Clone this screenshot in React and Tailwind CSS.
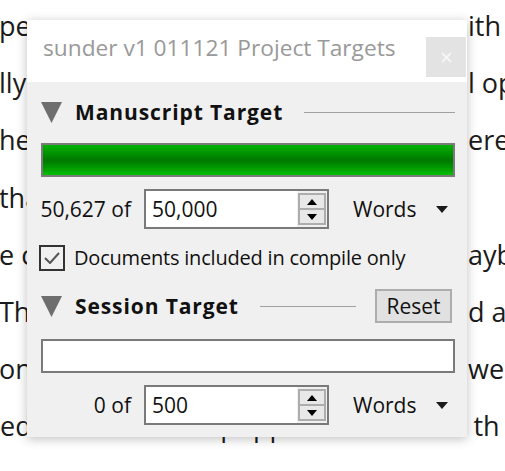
import React from "react";

const lines = [
  ["pe", "ith"],
  ["lly", "l op"],
  ["he", "ere"],
  ["tha", ""],
  ["e c", "ayb"],
  ["Th", "d as"],
  ["on", "we"],
];

function Tri() {
  return (
    <svg width="21" height="21" viewBox="0 0 21 21">
      <polygon points="0,0 21,0 10.5,21" fill="#6e6e6e" />
    </svg>
  );
}

function Arrow() {
  return (
    <svg width="12" height="7" viewBox="0 0 12 7">
      <polygon points="0,0 12,0 6,7" fill="#1a1a1a" />
    </svg>
  );
}

function SpinBox({ value }) {
  return (
    <div className="flex h-[40px] w-[185px] items-center border-2 border-[#7a7a7a] bg-white">
      <div className="flex-1 pl-[6px] text-[21px] leading-none text-[#111]">{value}</div>
      <div className="flex h-full w-[30px] flex-col justify-center bg-[#f0f0f0] px-[1px] py-[2px]">
        <div className="flex flex-1 items-center justify-center border-2 border-[#adadad] bg-[#e8e8e8]">
          <svg width="10" height="6" viewBox="0 0 10 6"><polygon points="5,0 10,6 0,6" fill="#000" /></svg>
        </div>
        <div className="flex flex-1 items-center justify-center border-2 border-t-0 border-[#adadad] bg-[#e8e8e8]">
          <svg width="10" height="6" viewBox="0 0 10 6"><polygon points="0,0 10,0 5,6" fill="#000" /></svg>
        </div>
      </div>
    </div>
  );
}

function CountRow({ label, value }) {
  return (
    <div className="flex h-[40px] items-center">
      <div className="w-[91px] text-right text-[21px] leading-none text-[#111]">{label}</div>
      <div className="ml-[13px]"><SpinBox value={value} /></div>
      <div className="ml-[24px] text-[21px] leading-none text-[#111]">Words</div>
      <div className="ml-[20px] mt-[1px]"><Arrow /></div>
    </div>
  );
}

export default function App() {
  return (
    <div
      className="relative h-[471px] w-[505px] overflow-hidden bg-white"
      style={{ fontFamily: '"Open Sans", "Noto Sans", sans-serif' }}
    >
      <div className="-mt-[3px] text-[27px] leading-[57.2px] text-[#1b1b1b]">
        {lines.map(([l, r], i) => (
          <div key={i} className="flex justify-between whitespace-nowrap">
            <span className="-ml-[1px]">{l}</span>
            <span className="w-[37px] overflow-hidden">{r}</span>
          </div>
        ))}
        <div className="whitespace-nowrap">ed and then I am popped the look on th</div>
      </div>

      <div className="absolute left-[27px] top-[20px] flex h-[417px] w-[440px] flex-col bg-[#f0f0f0] shadow-[0_2px_10px_rgba(0,0,0,0.25)]">
        <div className="flex h-[62px] items-start bg-white">
          <div className="pl-[16px] pt-[13px] text-[22.7px] leading-[30px] text-[#999]">
            sunder v1 011121 Project Targets
          </div>
          <div className="ml-auto mr-[1px] mt-[17px] flex h-[40px] w-[40px] items-center justify-center bg-[#e3e3e3]">
            <svg width="11" height="11" viewBox="0 0 11 11">
              <path d="M1 1 L10 10 M10 1 L1 10" stroke="#f5f5f5" strokeWidth="2" />
            </svg>
          </div>
        </div>

        <div className="flex flex-col pl-[14px] pr-[12px]">
          <div className="mt-[19px] flex h-[22px] items-center">
            <Tri />
            <div className="ml-[13px] text-[21px] font-bold leading-none tracking-[0.9px] text-[#111]">Manuscript Target</div>
            <div className="ml-[21px] h-[1px] flex-1 bg-[#a0a0a0]" />
          </div>

          <div className="mt-[20px] h-[34px] border-2 border-[#7a7a7a] bg-[linear-gradient(to_bottom,#00b400_0%,#009000_30%,#007800_50%,#009800_75%,#00c000_100%)]" />

          <div className="mt-[12px] -ml-[1px]">
            <CountRow label="50,627 of" value="50,000" />
          </div>

          <div className="mt-[16px] flex h-[26px] items-center">
            <div className="-ml-[2px] flex h-[26px] w-[26px] items-center justify-center border-2 border-[#333]">
              <svg width="16" height="12" viewBox="0 0 16 12">
                <path d="M1 6 L6 11 L15 1" fill="none" stroke="#555" strokeWidth="2" />
              </svg>
            </div>
            <div className="ml-[9px] text-[20px] leading-none tracking-[-0.2px] text-[#111]">Documents included in compile only</div>
          </div>

          <div className="mt-[18px] flex h-[34px] items-center">
            <Tri />
            <div className="ml-[13px] text-[21px] font-bold leading-none tracking-[0.9px] text-[#111]">Session Target</div>
            <div className="ml-[21px] h-[1px] w-[96px] bg-[#a0a0a0]" />
            <div className="ml-auto mr-[3px] flex h-[34px] w-[77px] items-center justify-center border-2 border-[#adadad] bg-[#e1e1e1] text-[21px] leading-none text-[#111]">
              Reset
            </div>
          </div>

          <div className="mt-[16px] h-[34px] border-2 border-[#7a7a7a] bg-white" />

          <div className="mt-[12px] -ml-[1px]">
            <CountRow label="0 of" value="500" />
          </div>
        </div>
      </div>
    </div>
  );
}
